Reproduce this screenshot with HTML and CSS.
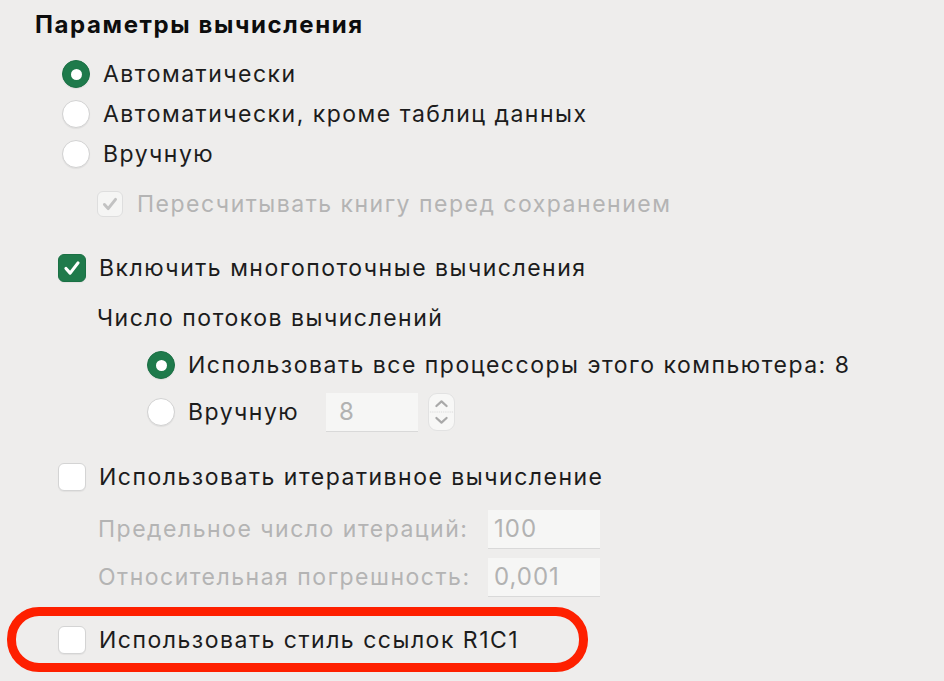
FILE: index.html
```html
<!DOCTYPE html>
<html lang="ru">

<head>
    <meta charset="UTF-8">
    <meta name="viewport" content="width=device-width, initial-scale=1.0">
    <title>Параметры вычисления</title>
    <link rel="stylesheet" href="styles.css">
</head>

<body>
    <div class="prefs">
        <h2 class="title">Параметры вычисления</h2>

        <!-- calculation mode -->
        <div class="row radio-row first">
            <span class="radio on"></span>
            <span class="label">Автоматически</span>
        </div>
        <div class="row radio-row">
            <span class="radio"></span>
            <span class="label">Автоматически, кроме таблиц данных</span>
        </div>
        <div class="row radio-row">
            <span class="radio"></span>
            <span class="label">Вручную</span>
        </div>
        <div class="row sub-check">
            <span class="check disabled">
                <svg viewBox="0 0 26 26"><path d="M7 13.5l4 4.5 8-10" /></svg>
            </span>
            <span class="label muted">Пересчитывать книгу перед сохранением</span>
        </div>

        <!-- threads -->
        <div class="row check-row threads">
            <span class="check on">
                <svg viewBox="0 0 28 28"><path d="M7.5 14.5l4.5 5 8.5-11" /></svg>
            </span>
            <span class="label">Включить многопоточные вычисления</span>
        </div>
        <div class="row caption">
            <span class="label">Число потоков вычислений</span>
        </div>
        <div class="row radio-row nested">
            <span class="radio on"></span>
            <span class="label">Использовать все процессоры этого компьютера: 8</span>
        </div>
        <div class="row radio-row nested">
            <span class="radio"></span>
            <span class="label manual">Вручную</span>
            <div class="spin">
                <span class="field small">8</span>
                <span class="stepper">
                    <svg viewBox="0 0 27 38">
                        <path class="arrow" d="M8 12.5l5.5-5 5.5 5" />
                        <path class="split" d="M1 19h25" />
                        <path class="arrow" d="M8 25.5l5.5 5 5.5-5" />
                    </svg>
                </span>
            </div>
        </div>

        <!-- iteration -->
        <div class="row check-row iter">
            <span class="check"></span>
            <span class="label">Использовать итеративное вычисление</span>
        </div>
        <div class="row value-row first-value">
            <span class="label muted value-label">Предельное число итераций:</span>
            <span class="field wide">100</span>
        </div>
        <div class="row value-row">
            <span class="label muted value-label">Относительная погрешность:</span>
            <span class="field wide">0,001</span>
        </div>

        <!-- reference style -->
        <div class="highlight">
            <div class="row check-row">
                <span class="check"></span>
                <span class="label">Использовать стиль ссылок R1C1</span>
            </div>
        </div>
    </div>
</body>

</html>
```

FILE: styles.css
```css
* {
    box-sizing: border-box;
    margin: 0;
    padding: 0;
}

body {
    background: #eeedec;
    font-family: Inter, "Noto Sans", sans-serif;
    color: #1c1c1c;
    width: 944px;
    height: 681px;
    overflow: hidden;
}

.prefs {
    display: flex;
    flex-direction: column;
    padding-top: 10px;
}

.title {
    font-size: 24px;
    font-weight: 700;
    letter-spacing: 1.6px;
    line-height: 30px;
    height: 30px;
    margin-left: 35px;
    color: #0d0d0d;
}

.row {
    display: flex;
    align-items: center;
    height: 40px;
}

.label {
    font-size: 23px;
    letter-spacing: 1.5px;
    line-height: 26px;
    white-space: nowrap;
}

.muted {
    color: #b4b4b4;
}

/* radio buttons */
.radio-row {
    padding-left: 62px;
    gap: 13px;
}

.radio-row.first {
    margin-top: 14px;
}

.radio-row.nested {
    padding-left: 147px;
    margin-top: 7px;
}

.radio {
    width: 28px;
    height: 28px;
    border-radius: 50%;
    background: #fff;
    border: 1px solid #d2d2d2;
    box-shadow: 0 1px 1px rgba(0, 0, 0, 0.06);
    flex-shrink: 0;
    display: flex;
    align-items: center;
    justify-content: center;
}

.radio.on {
    background: #1e7a4b;
    border-color: #1a6f44;
}

.radio.on::after {
    content: "";
    width: 11px;
    height: 11px;
    border-radius: 50%;
    background: #fff;
}

/* checkboxes */
.check {
    width: 28px;
    height: 28px;
    border-radius: 6px;
    background: #fff;
    border: 1px solid #d4d4d4;
    box-shadow: 0 1px 1px rgba(0, 0, 0, 0.05);
    flex-shrink: 0;
    display: flex;
    align-items: center;
    justify-content: center;
}

.check svg {
    width: 100%;
    height: 100%;
    fill: none;
    stroke-linecap: round;
    stroke-linejoin: round;
}

.check.on {
    background: #1f7a4b;
    border-color: #1a7044;
}

.check.on svg {
    stroke: #fff;
    stroke-width: 3.4;
}

.check.disabled {
    width: 26px;
    height: 26px;
    background: #f5f5f4;
    border-color: #dedede;
    box-shadow: none;
}

.check.disabled svg {
    stroke: #c2c2c2;
    stroke-width: 3.2;
}

.check-row {
    padding-left: 58px;
    gap: 13px;
}

.sub-check {
    padding-left: 97px;
    gap: 14px;
    margin-top: 10px;
}

.threads {
    margin-top: 24px;
}

.caption {
    padding-left: 97px;
    margin-top: 10px;
}

.iter {
    margin-top: 25px;
}

/* number fields */
.field {
    height: 39px;
    background: #f6f6f5;
    border-bottom: 1px solid #d9d9d9;
    font-size: 24px;
    letter-spacing: 1px;
    color: #b2b2b2;
    display: flex;
    align-items: center;
}

.field.small {
    width: 92px;
    padding-left: 13px;
}

.field.wide {
    width: 112px;
    padding-left: 6px;
}

.manual {
    width: 110px;
}

.spin {
    display: flex;
    align-items: center;
    gap: 10px;
    margin-left: 15px;
}

.stepper {
    width: 27px;
    height: 38px;
    border-radius: 9px;
    background: #f7f7f6;
    border: 1px solid #e2e2e2;
    display: flex;
}

.stepper svg {
    width: 100%;
    height: 100%;
    fill: none;
}

.stepper .arrow {
    stroke: #a9a9a9;
    stroke-width: 2.4;
    stroke-linecap: round;
    stroke-linejoin: round;
}

.stepper .split {
    stroke: #d6d6d6;
    stroke-width: 1;
    stroke-dasharray: 1 1;
}

.value-row {
    padding-left: 98px;
    margin-top: 8px;
}

.value-row.first-value {
    margin-top: 12px;
}

.value-label {
    width: 390px;
}

/* red frame around the R1C1 option */
.highlight {
    margin-top: 10px;
    margin-left: 7px;
    width: 581px;
    height: 65px;
    border: 9px solid #fe2000;
    border-radius: 32px;
    display: flex;
    align-items: center;
}

.highlight .check-row {
    padding-left: 42px;
}
```
